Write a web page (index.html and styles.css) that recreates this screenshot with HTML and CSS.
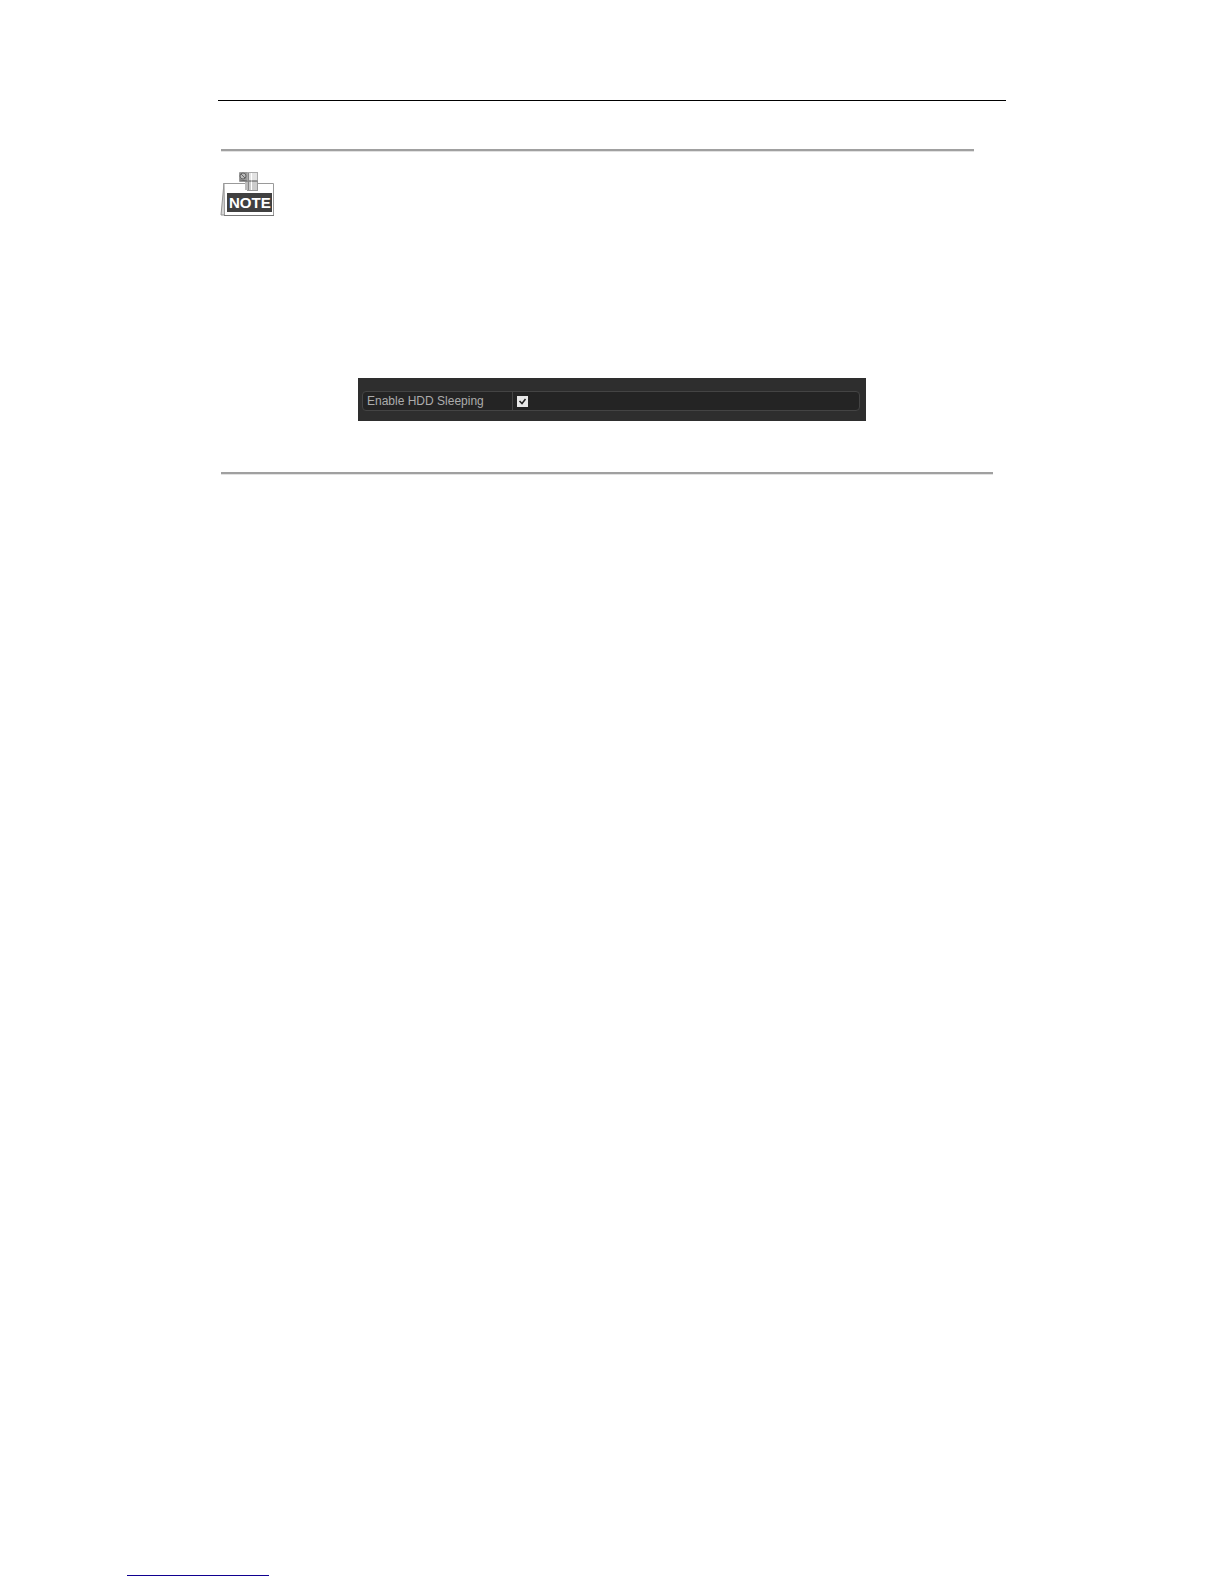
FILE: index.html
```html
<!DOCTYPE html>
<html lang="en">
<head>
  <meta charset="UTF-8">
  <title>HDD Sleeping</title>
  <link rel="stylesheet" href="styles.css">
</head>
<body>

<div class="page">
  <div class="content">
    <hr class="header-line">
    <hr class="note-line note-start">
    <!--note sign-->
    <svg class="note-icon" width="56" height="48" viewBox="0 0 56 48" role="img" aria-label="NOTE">
      <path d="M4 13L1 45H5Z" fill="#d8d8d8" stroke="#949494"/>
      <path d="M4 13.5H53.500V45.500H4.500Z" fill="#fff" stroke="#9a9a9a"/>
      <path d="M4 45.500H54" stroke="#777"/>
      <rect x="7" y="23" width="45" height="19" fill="#404040"/>
      <text class="note-text" x="9" y="38">NOTE</text>
      <!--clip-->
      <rect x="19" y="2" width="9" height="10" rx="1" fill="#999"/>
      <circle cx="23" cy="6" r="3" fill="#bbb" stroke="#666"/>
      <path d="M20 10L27 11M21 4L25 8" stroke="#666"/>
      <rect x="27.500" y="2.500" width="10" height="8" fill="#e2e2e2" stroke="#aaa"/>
      <rect x="27.500" y="11.500" width="10" height="9" fill="#ccc" stroke="#999"/>
      <path d="M25 12V20H28V12Z" fill="#bbb"/>
      <path d="M31.500 3V20" stroke="#fff"/>
      <path d="M27 11H38M28.500 3V20" stroke="#888"/>
    </svg>
    <!--setting panel-->
    <form class="panel">
      <div class="row">
        <label class="row-name" for="sleeping">Enable HDD Sleeping</label>
        <div class="row-value"><input type="checkbox" id="sleeping" checked></div>
      </div>
    </form>
    <hr class="note-line note-end">
  </div>
  <div class="footer"></div>
</div>

</body>
</html>
```

FILE: styles.css
```css
*{
  margin: 0;
  padding: 0;
  box-sizing: border-box;
}
body{
  background-color: #fff;
  font-family: "Liberation Sans", Arial, sans-serif;
}
hr{
  border: 0;
}
.page{
  display: flex;
  flex-direction: column;
  justify-content: space-between;
  min-height: 100vh;
  padding: 100px 218px 8px 127px;
}
.content{
  padding-left: 91px;
}
.header-line{
  height: 1px;
  background-color: #000;
}
.note-line{
  height: 3px;
  background-color: #a0a0a0;
  border-bottom: 1px solid #e2e2e2;
}
.note-start{
  margin: 48px 32px 0 3px;
}
.note-end{
  margin: 51px 13px 0 3px;
}
.note-icon{
  display: block;
  margin: 18px 0 0 2px;
}
.note-text{
  fill: #fff;
  font-size: 15px;
  font-weight: bold;
}
.panel{
  margin: 160px 140px 0;
  padding: 13px 6px 10px 4px;
  background-color: #2e2e2e;
}
.row{
  display: flex;
  height: 20px;
  border: 1px solid #444;
  border-radius: 4px;
  background-color: #242424;
}
.row-name{
  width: 150px;
  padding-left: 4px;
  border-right: 1px solid #444;
  color: #acacac;
  font-size: 12px;
  line-height: 19px;
}
.row-value{
  display: flex;
  flex: 1;
  align-items: center;
  padding-left: 4px;
}
.row-value input{
  width: 11px;
  height: 11px;
  appearance: none;
  background: #e8e8e8 url("data:image/svg+xml,%3Csvg xmlns='http://www.w3.org/2000/svg' viewBox='0 0 11 11'%3E%3Cpath d='M2.500 5l2.500 2.500 3.500-4.500' fill='none' stroke='%23222' stroke-width='1.500'/%3E%3C/svg%3E") center no-repeat;
  cursor: pointer;
}
.row-value input:not(:checked){
  background-image: none;
}
.footer{
  width: 142px;
  height: 1px;
  background-color: #100090;
}
```
